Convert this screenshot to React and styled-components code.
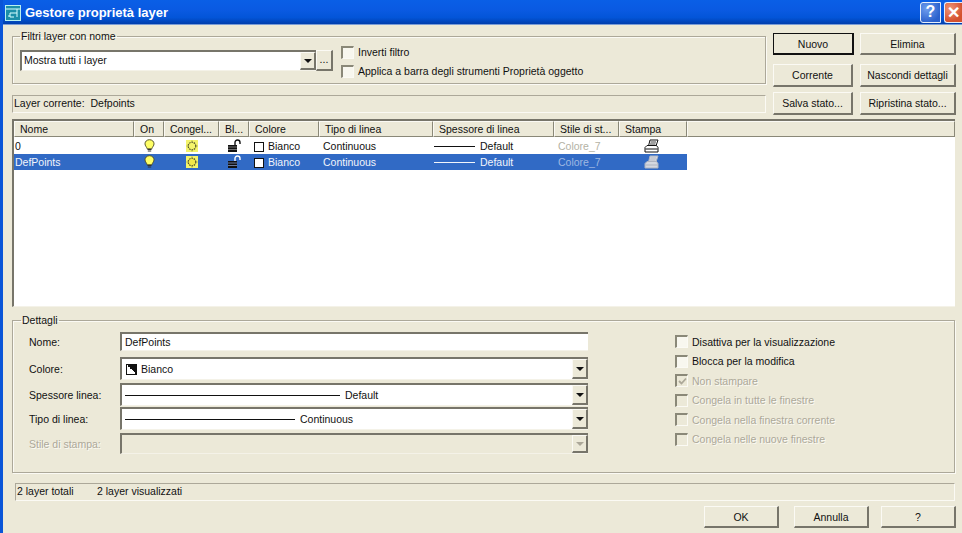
import React from 'react';
import styled, { createGlobalStyle, css } from 'styled-components';

const GlobalStyle = createGlobalStyle`
  html, body {
    margin: 0;
    padding: 0;
    background: #ece9d8;
  }
  body {
    font-family: 'Liberation Sans', Arial, sans-serif;
    font-size: 10.5px;
    color: #111;
    overflow: hidden;
  }
`;

const raised = css`
  border-style: solid;
  border-width: 1px 2px 2px 1px;
  border-color: #fbfaf4 #77756a #77756a #fbfaf4;
  background: #ece9d8;
`;

const sunken = css`
  border-style: solid;
  border-width: 2px 0 1px 2px;
  border-color: #77756a #f4f2e8 #f4f2e8 #77756a;
`;

const Window = styled.div`
  width: 962px;
  height: 533px;
  display: flex;
  flex-direction: column;
  overflow: hidden;
  box-sizing: border-box;
  border-left: 3px solid #0a55d8;
`;

const TitleBar = styled.div`
  height: 25px;
  margin-left: -3px;
  flex: none;
  display: flex;
  align-items: center;
  padding-left: 5px;
  box-sizing: border-box;
  background: linear-gradient(180deg, #0a5fe6 0%, #0a5ae2 40%, #0355d8 70%, #0040b0 94%, #b8cbe8 100%);
`;

const Title = styled.span`
  margin-left: 4px;
  font-size: 13px;
  font-weight: bold;
  color: #fff;
  flex: 1;
`;

const CapButton = styled.span`
  width: ${(p) => (p.$close ? '18px' : '21px')};
  height: 21px;
  margin-right: ${(p) => (p.$close ? '0' : '3px')};
  margin-top: -1px;
  box-sizing: border-box;
  border: 1px solid #e6eefa;
  border-right-width: ${(p) => (p.$close ? '0' : '1px')};
  border-radius: 3px 0 0 3px;
  display: flex;
  align-items: center;
  justify-content: center;
  color: #fff;
  font-size: 16px;
  font-weight: bold;
  background: ${(p) =>
    p.$close
      ? 'radial-gradient(circle at 30% 30%, #ee9477, #d4512e 70%)'
      : 'radial-gradient(circle at 30% 30%, #6f9eee, #2a60cc 75%)'};
`;

const Body = styled.div`
  flex: 1;
  display: flex;
  flex-direction: column;
  padding: 5px 5px 0 9px;
  min-height: 0;
`;

const TopArea = styled.div`
  display: flex;
  gap: 7px;
`;

const TopLeft = styled.div`
  width: 754px;
  display: flex;
  flex-direction: column;
`;

const Group = styled.fieldset`
  margin: 0;
  min-width: 0;
  box-sizing: border-box;
  border: 1px solid #aca899;
  box-shadow: inset 1px 1px 0 #fbfaf4, 1px 1px 0 #fbfaf4;
  height: ${(p) => p.$height}px;
  padding: ${(p) => p.$padding};
`;

const Legend = styled.legend`
  margin-left: ${(p) => p.$offset}px;
  padding: 0 1px;
  line-height: 13px;
  font-size: 10.5px;
`;

const FilterRow = styled.div`
  display: flex;
  align-items: flex-start;
`;

const FilterCombo = styled.div`
  ${sunken}
  width: 296px;
  height: 21px;
  box-sizing: border-box;
  background: #fff;
  display: flex;
  align-items: center;
  justify-content: space-between;
  padding-left: 2px;
  line-height: 15px;
`;

const ComboText = styled.span`
  margin-top: -2px;
`;

const MoreButton = styled.div`
  ${raised}
  width: 17px;
  height: 21px;
  box-sizing: border-box;
  line-height: 16px;
  text-align: center;
`;

const FilterChecks = styled.div`
  margin: -5px 0 0 8px;
  display: flex;
  flex-direction: column;
  gap: 5px;
`;

const CheckRow = styled.label`
  display: flex;
  align-items: center;
  gap: ${(p) => p.$gap || 4}px;
  height: ${(p) => p.$height || 14}px;
  color: ${(p) => (p.$disabled ? '#aca899' : '#111')};
  text-shadow: ${(p) => (p.$disabled ? '1px 1px 0 #fbfaf4' : 'none')};
`;

const Check = styled.span`
  width: 13px;
  height: 13px;
  flex: none;
  box-sizing: border-box;
  border-style: solid;
  border-width: 2px 1px 1px 2px;
  border-color: #8a8878 #fbfaf4 #fbfaf4 #8a8878;
  background: ${(p) => (p.$disabled ? '#ece9d8' : '#f8f7ef')};
  display: flex;
  align-items: center;
  justify-content: center;
`;

const CurrentLayer = styled.div`
  margin-top: 11px;
  height: 18px;
  box-sizing: border-box;
  border: 1px solid;
  border-color: #aca899 #fbfaf4 #fbfaf4 #aca899;
  padding-left: 1px;
  line-height: 15px;
  white-space: pre;
`;

const ActionGrid = styled.div`
  display: grid;
  grid-template-columns: 87px 97px;
  grid-template-rows: 31px 28px 23px;
  align-items: start;
  padding-top: 3px;
  height: 85px;
  box-sizing: border-box;
`;

const Button = styled.div`
  ${raised}
  box-sizing: border-box;
  display: flex;
  align-items: center;
  justify-content: center;
  width: ${(p) => p.$width}px;
  height: ${(p) => p.$height}px;
  ${(p) =>
    p.$primary &&
    css`
      border: 1px solid #111;
      border-right-width: 2px;
      border-bottom-width: 2px;
    `}
`;

const ListView = styled.div`
  margin-top: 4px;
  height: 188px;
  width: 943px;
  box-sizing: border-box;
  border-style: solid;
  border-width: 2px 0 1px 2px;
  border-color: #77756a #f4f2e8 #f4f2e8 #77756a;
  background: #fff;
`;

const columns = '120px 30px 55px 30px 70px 114px 121px 65px 68px';

const HeaderRow = styled.div`
  display: grid;
  grid-template-columns: ${columns} 1fr;
  height: 16px;
`;

const HeaderCell = styled.div`
  ${raised}
  border-width: 1px;
  border-color: #fbfaf4 #8a8878 #8a8878 #fbfaf4;
  box-sizing: border-box;
  padding-left: 5px;
  line-height: 14px;
  white-space: nowrap;
  overflow: hidden;
`;

const Rows = styled.div`
  padding-top: 1px;
`;

const Row = styled.div`
  display: grid;
  grid-template-columns: ${columns};
  width: max-content;
  height: 16px;
  align-items: center;
  background: ${(p) => (p.$selected ? '#316ac5' : '#fff')};
  color: ${(p) => (p.$selected ? '#f2f5fb' : '#111')};
`;

const Cell = styled.div`
  display: flex;
  align-items: center;
  height: 16px;
  white-space: nowrap;
  padding-left: ${(p) => (p.$pad === undefined ? 4 : p.$pad)}px;
  padding-right: ${(p) => p.$padRight || 0}px;
  justify-content: ${(p) => (p.$center ? 'center' : 'flex-start')};
  color: ${(p) => (p.$muted ? (p.$selected ? '#9fb8e2' : '#b4b2a4') : 'inherit')};
`;

const Swatch = styled.span`
  width: 10px;
  height: 10px;
  margin: 2px 4px 0 1px;
  box-sizing: border-box;
  border: 1px solid #111;
  background: #fff;
  flex: none;
`;

const LineSample = styled.span`
  display: block;
  flex: none;
  height: 1px;
  width: ${(p) => p.$width}px;
  margin-right: 5px;
  background: currentColor;
`;

const DetailsWrap = styled.div`
  margin-top: 7px;
  width: 943px;
`;

const DetailsLayout = styled.div`
  display: flex;
  padding-top: 5px;
`;

const FieldGrid = styled.div`
  width: 559px;
  display: flex;
  flex-direction: column;
`;

const FieldRow = styled.div`
  display: flex;
  align-items: center;
  height: ${(p) => p.$height}px;
  margin-top: ${(p) => p.$top || 0}px;
`;

const FieldLabel = styled.span`
  width: 91px;
  flex: none;
  color: ${(p) => (p.$disabled ? '#aca899' : '#111')};
  text-shadow: ${(p) => (p.$disabled ? '1px 1px 0 #fbfaf4' : 'none')};
`;

const Field = styled.div`
  ${sunken}
  width: 468px;
  height: 100%;
  box-sizing: border-box;
  background: ${(p) => (p.$disabled ? '#ece9d8' : '#fff')};
  display: flex;
  align-items: center;
  padding-left: ${(p) => p.$pad || 3}px;
`;

const FieldValue = styled.div`
  flex: 1;
  display: flex;
  align-items: center;
  min-width: 0;
`;

const DropButton = styled.div`
  ${raised}
  width: 16px;
  height: 100%;
  flex: none;
  box-sizing: border-box;
  display: flex;
  align-items: center;
  justify-content: center;
`;

const Arrow = styled.span`
  width: 0;
  height: 0;
  border-style: solid;
  border-width: 4px 4px 0 4px;
  border-color: ${(p) => (p.$disabled ? '#aca899' : '#111')} transparent transparent transparent;
`;

const ColorIcon = styled.span`
  width: 11px;
  height: 11px;
  margin-right: 4px;
  flex: none;
  box-sizing: border-box;
  border: 1px solid #111;
  background: linear-gradient(45deg, #fff 50%, #111 50%);
`;

const Flags = styled.div`
  margin-left: 87px;
  display: flex;
  flex-direction: column;
`;

const StatusBar = styled.div`
  margin: 10px 0 0 3px;
  width: 940px;
  height: 18px;
  box-sizing: border-box;
  border: 1px solid;
  border-color: #aca899 #fbfaf4 #fbfaf4 #aca899;
  display: flex;
  line-height: 15px;
  padding-left: 1px;
`;

const StatusItem = styled.span`
  width: 80px;
`;

const Footer = styled.div`
  margin-top: 5px;
  width: 944px;
  display: flex;
  justify-content: flex-end;
  gap: 15px;
  & > :last-child {
    margin-left: -3px;
  }
`;

const AppIcon = () => (
  <svg width="16" height="18" viewBox="0 0 16 18">
    <rect x="0.5" y="1.5" width="15" height="15" fill="#1c8fa8" stroke="#b8f0f0" />
    <path d="M1 5h14M5 9h7M12 5v8M5 9v4h4M3 12h2" stroke="#d8ffff" strokeWidth="1" fill="none" />
  </svg>
);

const Bulb = () => (
  <svg width="11" height="14" viewBox="0 0 11 14">
    <path d="M5.5 0.7C2.8 0.7 1 2.6 1 4.8c0 2 1.6 3 2.2 5h4.6C8.4 7.8 10 6.800 10 4.800 10 2.600 8.200 0.700 5.500 0.700z" fill="#ffff66" stroke="#55552a" />
    <path d="M3.500 10.500h4M3.800 12h3.400" stroke="#333" strokeWidth="1.200" />
  </svg>
);

const Sun = ({ selected }) => (
  <svg width="12" height="12" viewBox="0 0 12 12">
    <rect width="12" height="12" fill="#f4f46a" />
    <circle cx="6" cy="6" r="3.800" fill={selected ? '#f2e84a' : '#f4f46a'} stroke="#55552a" strokeWidth="1.200" strokeDasharray="1.600 0.800" />
    <path d="M6 0.500v1M6 10.500v1M0.500 6h1M10.500 6h1" stroke="#8a8a40" strokeWidth="0.800" />
  </svg>
);

const Lock = ({ selected }) => (
  <svg width="14" height="14" viewBox="0 0 14 14">
    <path d="M8 6V3.500C8 2 9 1 10.500 1S13 2 13 3.500V5" fill="none" stroke={selected ? '#fff' : '#111'} strokeWidth="1.400" />
    <rect x="1" y="6" width="9" height="7" fill="#111" />
    <path d="M1 8h9M1 10.500h9" stroke={selected ? '#8fa8d8' : '#999'} strokeWidth="0.700" />
  </svg>
);

const Printer = ({ selected }) => {
  const ink = selected ? '#aeb4c0' : '#111';
  const fill = selected ? '#d4d8e0' : '#fff';
  return (
    <svg width="15" height="15" viewBox="0 0 15 15">
      <path d="M6 1h8l-2 6H4.500z" fill={fill} stroke={ink} />
      <path d="M6.500 3h5.500M6 5h5.500" stroke={ink} strokeWidth="0.800" />
      <path d="M3 6.500h9.500l1.500 2v4.500H1V8.500z" fill={fill} stroke={ink} />
      <path d="M1.500 10h12" stroke={ink} />
    </svg>
  );
};

const Tick = () => (
  <svg width="9" height="9" viewBox="0 0 9 9">
    <path d="M1 4l2.500 2.500L8 1.500" fill="none" stroke="#aca899" strokeWidth="1.800" />
  </svg>
);

const headers = ['Nome', 'On', 'Congel...', 'Bl...', 'Colore', 'Tipo di linea', 'Spessore di linea', 'Stile di st...', 'Stampa', ''];

const layers = [
  { name: '0', selected: false },
  { name: 'DefPoints', selected: true },
];

const flags = [
  { label: 'Disattiva per la visualizzazione' },
  { label: 'Blocca per la modifica' },
  { label: 'Non stampare', disabled: true, checked: true },
  { label: 'Congela in tutte le finestre', disabled: true },
  { label: 'Congela nella finestra corrente', disabled: true },
  { label: 'Congela nelle nuove finestre', disabled: true },
];

export default function App() {
  return (
    <>
      <GlobalStyle />
      <Window>
        <TitleBar>
          <AppIcon />
          <Title>Gestore proprietà layer</Title>
          <CapButton>?</CapButton>
          <CapButton $close>✕</CapButton>
        </TitleBar>
        <Body>
          <TopArea>
            <TopLeft>
              <Group $height={54} $padding="7px 7px 0 7px">
                <Legend $offset={0}>Filtri layer con nome</Legend>
                <FilterRow>
                  <FilterCombo>
                    <ComboText>Mostra tutti i layer</ComboText>
                    <DropButton>
                      <Arrow />
                    </DropButton>
                  </FilterCombo>
                  <MoreButton>...</MoreButton>
                  <FilterChecks>
                    <CheckRow>
                      <Check />
                      Inverti filtro
                    </CheckRow>
                    <CheckRow>
                      <Check />
                      Applica a barra degli strumenti Proprietà oggetto
                    </CheckRow>
                  </FilterChecks>
                </FilterRow>
              </Group>
              <CurrentLayer>Layer corrente:  Defpoints</CurrentLayer>
            </TopLeft>
            <ActionGrid>
              <Button $primary $width={81} $height={22}>Nuovo</Button>
              <Button $width={96} $height={22}>Elimina</Button>
              <Button $width={80} $height={23}>Corrente</Button>
              <Button $width={96} $height={23}>Nascondi dettagli</Button>
              <Button $width={80} $height={23}>Salva stato...</Button>
              <Button $width={96} $height={23}>Ripristina stato...</Button>
            </ActionGrid>
          </TopArea>

          <ListView>
            <HeaderRow>
              {headers.map((h, i) => (
                <HeaderCell key={i}>{h}</HeaderCell>
              ))}
            </HeaderRow>
            <Rows>
              {layers.map((l) => (
                <Row key={l.name} $selected={l.selected}>
                  <Cell $pad={1}>{l.name}</Cell>
                  <Cell $pad={0} $center>
                    <Bulb />
                  </Cell>
                  <Cell $pad={0} $center>
                    <Sun selected={l.selected} />
                  </Cell>
                  <Cell $pad={0} $center>
                    <Lock selected={l.selected} />
                  </Cell>
                  <Cell>
                    <Swatch />
                    Bianco
                  </Cell>
                  <Cell>Continuous</Cell>
                  <Cell $pad={1}>
                    <LineSample $width={41} />
                    Default
                  </Cell>
                  <Cell $muted $selected={l.selected}>
                    Colore_7
                  </Cell>
                  <Cell $pad={0} $padRight={4} $center>
                    <Printer selected={l.selected} />
                  </Cell>
                </Row>
              ))}
            </Rows>
          </ListView>

          <DetailsWrap>
            <Group $height={159} $padding="0 0 0 16px">
              <Legend $offset={-8}>Dettagli</Legend>
              <DetailsLayout>
                <FieldGrid>
                  <FieldRow $height={19}>
                    <FieldLabel>Nome:</FieldLabel>
                    <Field>DefPoints</Field>
                  </FieldRow>
                  <FieldRow $height={23} $top={6}>
                    <FieldLabel>Colore:</FieldLabel>
                    <Field $pad={4}>
                      <FieldValue>
                        <ColorIcon />
                        Bianco
                      </FieldValue>
                      <DropButton>
                        <Arrow />
                      </DropButton>
                    </Field>
                  </FieldRow>
                  <FieldRow $height={23} $top={3}>
                    <FieldLabel>Spessore linea:</FieldLabel>
                    <Field>
                      <FieldValue>
                        <LineSample $width={215} />
                        Default
                      </FieldValue>
                      <DropButton>
                        <Arrow />
                      </DropButton>
                    </Field>
                  </FieldRow>
                  <FieldRow $height={23} $top={1}>
                    <FieldLabel>Tipo di linea:</FieldLabel>
                    <Field>
                      <FieldValue>
                        <LineSample $width={170} />
                        Continuous
                      </FieldValue>
                      <DropButton>
                        <Arrow />
                      </DropButton>
                    </Field>
                  </FieldRow>
                  <FieldRow $height={21} $top={3}>
                    <FieldLabel $disabled>Stile di stampa:</FieldLabel>
                    <Field $disabled>
                      <FieldValue />
                      <DropButton>
                        <Arrow $disabled />
                      </DropButton>
                    </Field>
                  </FieldRow>
                </FieldGrid>
                <Flags>
                  {flags.map((f) => (
                    <CheckRow key={f.label} $height={19.5} $disabled={f.disabled}>
                      <Check $disabled={f.disabled}>{f.checked && <Tick />}</Check>
                      {f.label}
                    </CheckRow>
                  ))}
                </Flags>
              </DetailsLayout>
            </Group>
          </DetailsWrap>

          <StatusBar>
            <StatusItem>2 layer totali</StatusItem>
            <span>2 layer visualizzati</span>
          </StatusBar>

          <Footer>
            <Button $width={75} $height={22}>OK</Button>
            <Button $width={75} $height={22}>Annulla</Button>
            <Button $width={75} $height={22}>?</Button>
          </Footer>
        </Body>
      </Window>
    </>
  );
}
